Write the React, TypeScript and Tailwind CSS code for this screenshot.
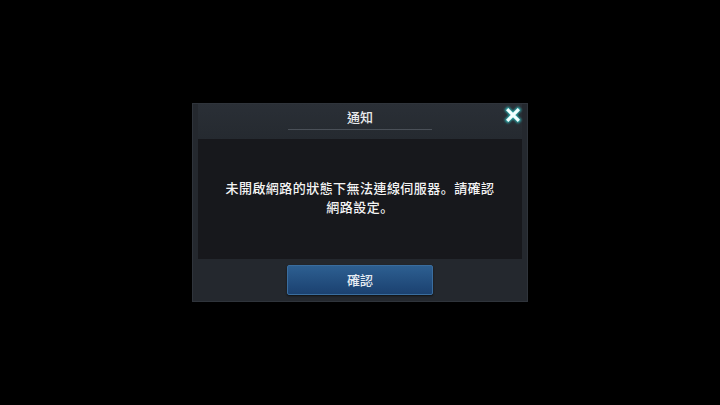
import React from "react";

const Stop = () => (
  <span
    className="inline-block leading-none align-baseline"
    style={{ fontFamily: '"Noto Sans CJK JP", sans-serif' }}
  >
    。
  </span>
);

export default function App() {
  return (
    <div
      className="w-[720px] h-[405px] bg-black flex items-center justify-center"
      style={{ fontFamily: '"Noto Sans CJK TC", "Noto Sans", sans-serif' }}
    >
      <div className="relative w-[336px] h-[199px] bg-[#24282e] border border-[#2f343b] flex flex-col items-center px-[5px]">
        <div className="w-full h-[35px] flex flex-col items-center bg-gradient-to-b from-[#2a2f36] to-[#252a30]">
          <div className="h-[25px] flex items-center text-[13px] font-medium text-[#e8eaec] leading-none">
            通知
          </div>
          <div className="w-[144px] h-px bg-[#4a5058]" />
        </div>
        <div className="w-full h-[120px] bg-[#17181c] flex flex-col items-center justify-center pb-[4px]">
          <p className="text-[13px] tracking-[0.45px] font-medium leading-[19px] text-[#f4f4f4] text-center">
            未開啟網路的狀態下無法連線伺服器<Stop />請確認
          </p>
          <p className="text-[13px] tracking-[0.45px] font-medium leading-[19px] text-[#f4f4f4] text-center">
            網路設定<Stop />
          </p>
        </div>
        <div className="flex-1 flex justify-center pt-[6px]">
          <button className="w-[146px] h-[30px] bg-gradient-to-b from-[#2d5f91] to-[#1b4170] border border-[#3a6d9e] rounded-[2px] text-[13px] font-medium text-[#e6ecf2] flex items-center justify-center shadow-[0_1px_2px_rgba(0,0,0,0.6)]">
            確認
          </button>
        </div>
        <div className="absolute right-[3px] top-[0px] w-[22px] h-[22px] flex items-center justify-center">
          <svg width="22" height="22" viewBox="0 0 22 22">
            <defs>
              <filter id="glow" x="-50%" y="-50%" width="200%" height="200%">
                <feGaussianBlur stdDeviation="1.2" />
              </filter>
            </defs>
            <path d="M6 6 L16 16 M16 6 L6 16" stroke="#2fb8b8" strokeWidth="5" strokeLinecap="square" filter="url(#glow)" />
            <path d="M6.3 6.3 L15.7 15.7 M15.7 6.3 L6.3 15.7" stroke="#f4ffff" strokeWidth="3.2" strokeLinecap="square" />
          </svg>
        </div>
      </div>
    </div>
  );
}
